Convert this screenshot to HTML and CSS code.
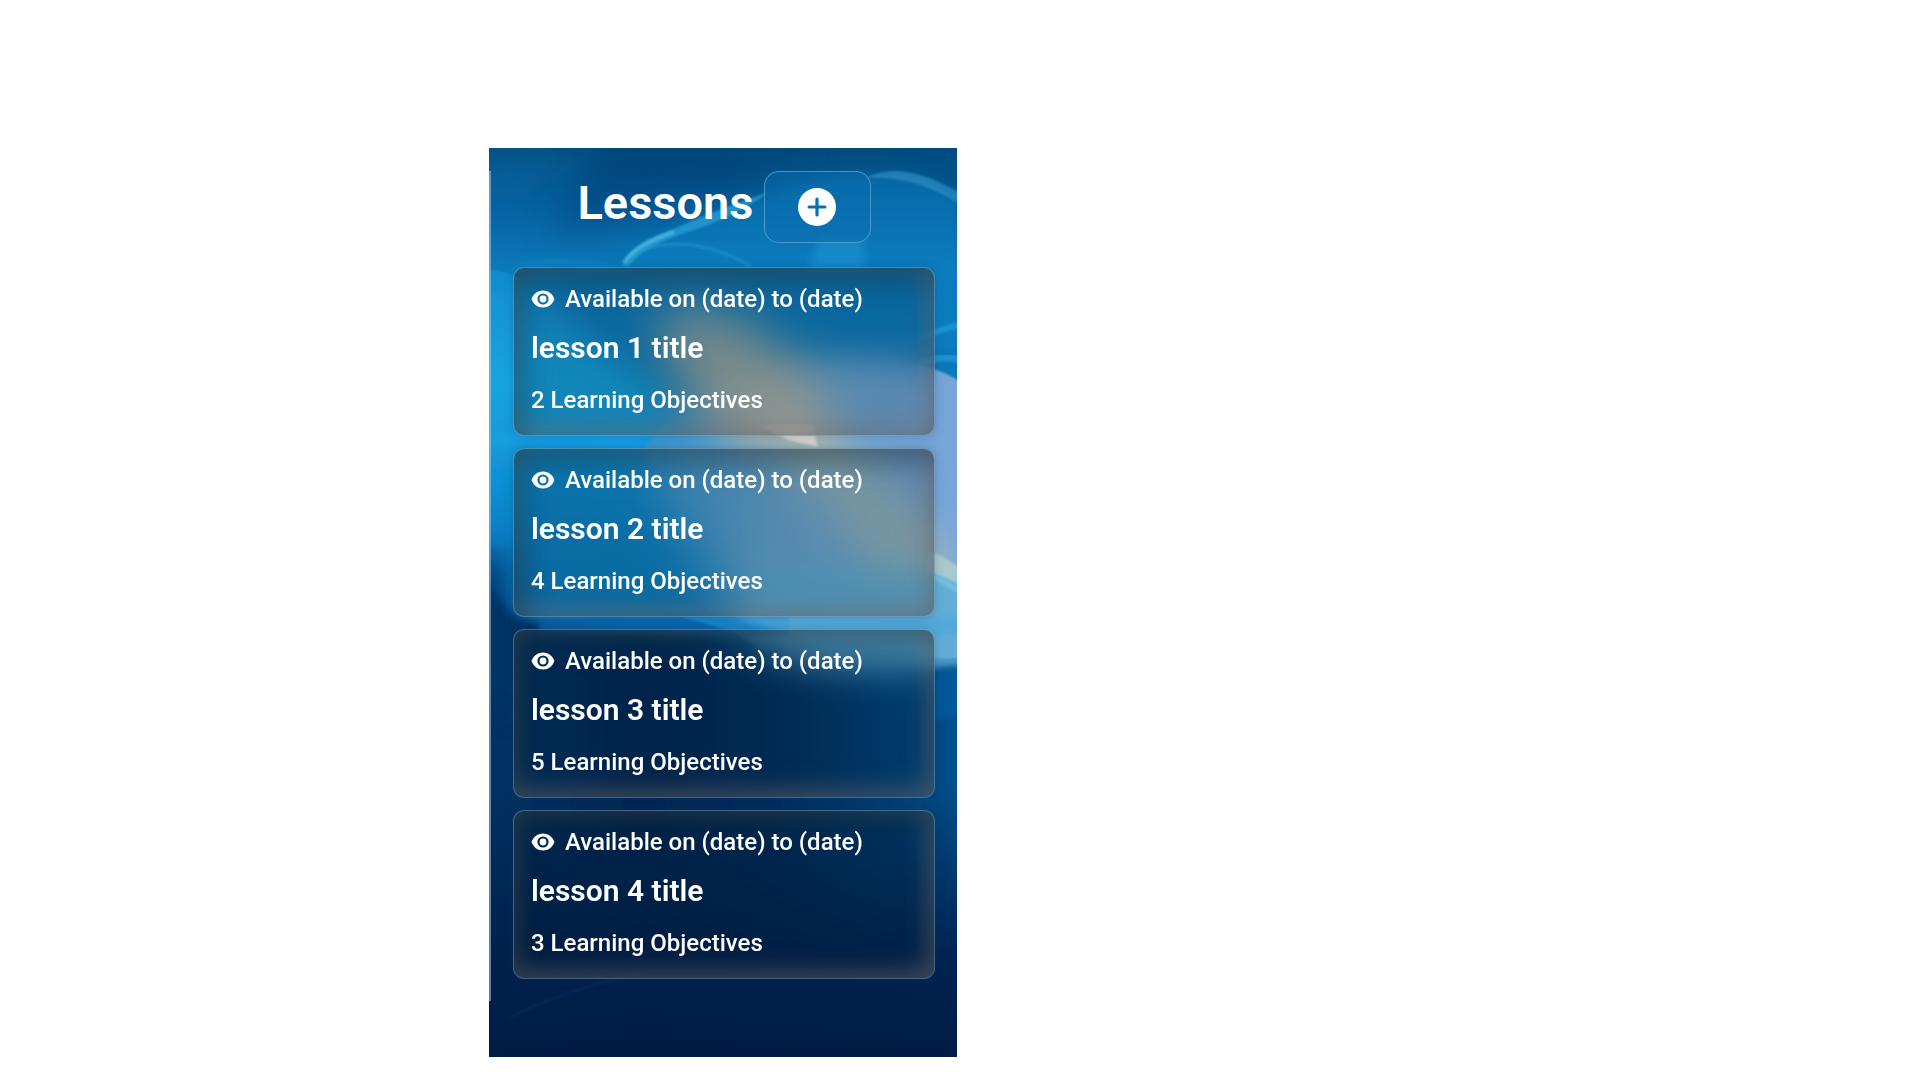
FILE: index.html
```html
<!DOCTYPE html>
<html lang="en">
<head>
    <meta charset="UTF-8">
    <meta name="viewport" content="width=device-width, initial-scale=1.0">
    <title>Lessons</title>
    <link rel="stylesheet" href="styles.css">
</head>
<body>

<!-- Icons -->
<svg class="icon-defs" aria-hidden="true">
    <symbol id="eye" viewBox="0 0 24 18">
        <path fill="currentColor" fill-rule="evenodd" d="M12 0.5C6.5 0.5 2.4 4 0.5 9c1.9 5 6 8.500 11.500 8.500s9.600-3.500 11.500-8.500C21.600 4 17.500 0.500 12 0.500zM12 3.400a5.600 5.600 0 1 1 0 11.200a5.600 5.600 0 0 1 0-11.200z"/>
        <circle cx="12" cy="9" r="3.400" fill="currentColor"/>
    </symbol>
</svg>

<main class="page">
    <div class="panel">
        <!-- Wallpaper -->
        <svg class="wallpaper" viewBox="0 0 468 909" preserveAspectRatio="none" aria-hidden="true">
            <defs>
                <linearGradient id="base" x1="0" y1="0" x2="0" y2="1">
                    <stop offset="0" stop-color="#024a7c"/>
                    <stop offset="0.06" stop-color="#05609f"/>
                    <stop offset="0.13" stop-color="#0d78b8"/>
                    <stop offset="0.25" stop-color="#0a78b8"/>
                    <stop offset="0.38" stop-color="#1083c8"/>
                    <stop offset="0.5" stop-color="#0a66ac"/>
                    <stop offset="0.6" stop-color="#033365"/>
                    <stop offset="0.75" stop-color="#002a57"/>
                    <stop offset="1" stop-color="#001d48"/>
                </linearGradient>
                <linearGradient id="lobe" x1="0" y1="0" x2="0" y2="1">
                    <stop offset="0" stop-color="#108cd0"/>
                    <stop offset="0.4" stop-color="#18a5e0"/>
                    <stop offset="0.75" stop-color="#1193d8"/>
                    <stop offset="1" stop-color="#0d78c0"/>
                </linearGradient>
                <linearGradient id="petal" x1="0" y1="0" x2="1" y2="0.2">
                    <stop offset="0" stop-color="#2f93cf"/>
                    <stop offset="0.5" stop-color="#6ba7d2"/>
                    <stop offset="1" stop-color="#78a5da"/>
                </linearGradient>
                <linearGradient id="night" x1="0" y1="0" x2="1" y2="0">
                    <stop offset="0" stop-color="#033668"/>
                    <stop offset="0.35" stop-color="#002754"/>
                    <stop offset="0.6" stop-color="#002f5e"/>
                    <stop offset="0.85" stop-color="#04457e"/>
                    <stop offset="1" stop-color="#07599a"/>
                </linearGradient>
                <linearGradient id="floor" x1="0" y1="0" x2="0" y2="1">
                    <stop offset="0" stop-color="#001e49" stop-opacity="0"/>
                    <stop offset="0.6" stop-color="#001e49" stop-opacity="0.85"/>
                    <stop offset="1" stop-color="#001c45"/>
                </linearGradient>
                <filter id="soft" x="-30%" y="-30%" width="160%" height="160%"><feGaussianBlur stdDeviation="5"/></filter>
                <filter id="softer" x="-50%" y="-50%" width="200%" height="200%"><feGaussianBlur stdDeviation="16"/></filter>
                <filter id="edge" x="-10%" y="-20%" width="120%" height="140%"><feGaussianBlur stdDeviation="1"/></filter>
                <filter id="haze" x="-10%" y="-30%" width="120%" height="160%"><feGaussianBlur stdDeviation="3"/></filter>
            </defs>
            <rect width="468" height="909" fill="url(#base)"/>
            <!-- ribbons behind the heading -->
            <path d="M-20 0H130L40 44L-20 60z" fill="#0b6aa8" opacity="0.4" filter="url(#softer)"/>
            <path d="M110 0H330L250 44L60 90z" fill="#013e72" opacity="0.5" filter="url(#softer)"/>
            <path d="M133 118C140 92 190 78 280 48C350 24 420 14 468 50V200H133z" fill="#0f83c4" opacity="0.4" filter="url(#soft)"/>
            <path d="M133 118C142 94 172 88 205 72C230 62 250 54 280 44C260 60 222 78 198 84C166 96 150 104 140 118z" fill="#2ca2da" opacity="0.7" filter="url(#edge)"/>
            <path d="M135 115C144 101 160 92 185 84" fill="none" stroke="#62c0e4" stroke-width="4" opacity="0.6" filter="url(#edge)"/>
            <path d="M150 103C190 88 230 100 262 118" fill="none" stroke="#2b9bd6" stroke-width="3" opacity="0.5" filter="url(#edge)"/>
            <path d="M376 30C410 14 440 28 474 46L474 58C440 36 410 28 376 30z" fill="#3da0d2" opacity="0.5" filter="url(#edge)"/>
            <path d="M330 90H375V122H320z" fill="#1f95d2" opacity="0.6" filter="url(#soft)"/>
            <path d="M20 122C36 106 90 108 133 118V140H10z" fill="#1088ca" opacity="0.6" filter="url(#haze)"/>
            <path d="M405 0H468V44C450 24 430 14 405 0z" fill="#034d83" opacity="0.6" filter="url(#soft)"/>
            <!-- left lobe -->
            <path d="M-10 122C12 120 26 128 40 135L190 260L170 400H-10z" fill="url(#lobe)" filter="url(#edge)"/>
            <path d="M410 205C430 190 450 180 478 176" fill="none" stroke="#28a0e2" stroke-width="6" opacity="0.6" filter="url(#edge)"/>
            <path d="M430 218C445 208 458 208 478 212" fill="none" stroke="#28a0e2" stroke-width="8" opacity="0.6" filter="url(#edge)"/>
            <!-- petal with its warm fold -->
            <path d="M155 300C180 260 270 200 360 208C420 212 455 220 478 238V510H290C220 480 170 420 155 300z" fill="url(#petal)" filter="url(#edge)"/>
            <path d="M165 170C230 140 290 190 330 240L360 310L250 300C210 270 175 220 165 170z" fill="#c3b59b" opacity="0.75" filter="url(#softer)"/>
            <path d="M290 270L360 300C400 330 450 370 470 430L400 470C370 400 330 340 290 300z" fill="#a9bdb4" opacity="0.7" filter="url(#softer)"/>
            <path d="M270 277L323 276L329 299L300 292z" fill="#d9d4cf" filter="url(#edge)"/>
            <path d="M-10 285H157V300H-10z" fill="#14a0e4" opacity="0.6" filter="url(#haze)"/>
            <path d="M30 310C150 320 220 370 260 500H30z" fill="#0b86c6" opacity="0.85" filter="url(#softer)"/>
            <path d="M260 430C360 410 450 420 488 432V522H270z" fill="#5cb0d8" opacity="0.8" filter="url(#soft)"/>
            <path d="M440 403C450 406 465 415 478 424V442C465 432 450 427 438 424z" fill="#b4d0cf" opacity="0.8" filter="url(#edge)"/>
            <path d="M438 426C450 430 460 436 478 448" fill="none" stroke="#79c4e6" stroke-width="6" opacity="0.7" filter="url(#edge)"/>
            <!-- lower shade -->
            <path d="M-40 430C0 430 10 450 22 466C60 482 160 484 200 486C260 495 340 524 400 526C440 526 465 520 508 518V960H-40z" fill="url(#night)" filter="url(#soft)"/>
            <path d="M-60 410H14V560H-60z" fill="#033668" filter="url(#softer)"/>
            <path d="M50 468H240L300 486H50z" fill="#0a5fa4" opacity="0.8" filter="url(#haze)"/>
            <path d="M190 468H300V486H250z" fill="#1c8bce" opacity="0.8" filter="url(#edge)"/>
            <path d="M240 468H478V486H300z" fill="#4fa8da" opacity="0.8" filter="url(#haze)"/>
            <path d="M446 528L456 520L478 518V570H446z" fill="#0560a5" opacity="0.6" filter="url(#haze)"/>
            <rect y="640" width="468" height="269" fill="url(#floor)"/>
            <path d="M20 870C60 850 95 838 150 826" fill="none" stroke="#0a3d70" stroke-width="3" opacity="0.3" filter="url(#edge)"/>
        </svg>

        <section class="lessons">
            <header class="lessons-header">
                <h1>Lessons</h1>
                <button type="button" class="add-button" aria-label="Add lesson">
                    <svg viewBox="0 0 38 38" aria-hidden="true">
                        <path fill="currentColor" fill-rule="evenodd" d="M19 0a19 19 0 1 1 0 38a19 19 0 0 1 0-38zM19 9.500a1.600 1.600 0 0 0-1.600 1.600v6.300h-6.300a1.600 1.600 0 0 0 0 3.200h6.300v6.300a1.600 1.600 0 0 0 3.200 0v-6.300h6.300a1.600 1.600 0 0 0 0-3.200h-6.300v-6.300a1.600 1.600 0 0 0-1.600-1.600z"/>
                    </svg>
                </button>
            </header>

            <div class="lesson-list">
                <article class="lesson">
                    <p class="availability"><svg class="eye"><use href="#eye"/></svg>Available on (date) to (date)</p>
                    <h2>lesson 1 title</h2>
                    <p class="objectives">2 Learning Objectives</p>
                </article>
                <article class="lesson">
                    <p class="availability"><svg class="eye"><use href="#eye"/></svg>Available on (date) to (date)</p>
                    <h2>lesson 2 title</h2>
                    <p class="objectives">4 Learning Objectives</p>
                </article>
                <article class="lesson">
                    <p class="availability"><svg class="eye"><use href="#eye"/></svg>Available on (date) to (date)</p>
                    <h2>lesson 3 title</h2>
                    <p class="objectives">5 Learning Objectives</p>
                </article>
                <article class="lesson">
                    <p class="availability"><svg class="eye"><use href="#eye"/></svg>Available on (date) to (date)</p>
                    <h2>lesson 4 title</h2>
                    <p class="objectives">3 Learning Objectives</p>
                </article>
            </div>
        </section>
    </div>
</main>

</body>
</html>
```
FILE: styles.css
```css
* {
    box-sizing: border-box;
}

body {
    margin: 0;
    background-color: #fff;
    color: #fff;
    font-family: Roboto, "Liberation Sans", sans-serif;
}

h1, h2, p {
    margin: 0;
}

.icon-defs {
    position: absolute;
    width: 0;
    height: 0;
}

.page {
    display: grid;
    grid-template-columns: 489fr minmax(400px, 468fr) 963fr;
    padding: 148px 0 23px;
}

.panel {
    grid-column: 2;
    position: relative;
    padding: 23px 0 56px;
    background-color: #00285a;
}

.wallpaper {
    position: absolute;
    top: 0;
    left: 0;
    width: 100%;
    height: 100%;
}

.lessons {
    position: relative;
    padding: 0 22px 22px;
    border-left: 2px solid rgba(160, 195, 225, 0.6);
}

.lessons-header {
    display: flex;
    justify-content: center;
    gap: 10px;
    margin-bottom: 24px;
}

h1 {
    font-size: 47px;
    font-weight: 600;
    line-height: 64px;
}

.add-button {
    display: flex;
    align-items: center;
    justify-content: center;
    width: 107px;
    height: 72px;
    padding: 0;
    color: #fff;
    background-color: rgba(10, 110, 175, 0.5);
    border: 1px solid rgba(130, 190, 230, 0.55);
    border-radius: 15px;
    cursor: pointer;
}

.add-button svg {
    width: 38px;
    height: 38px;
}

.lesson-list {
    display: grid;
    gap: 12px;
}

.lesson {
    min-height: 169px;
    padding: 15px 17px;
    border: 1px solid rgba(140, 165, 185, 0.5);
    border-radius: 11px;
    background-color: rgba(0, 25, 40, 0.2);
    backdrop-filter: blur(18px);
    box-shadow: 0 0 10px rgba(0, 60, 110, 0.25),
        inset 8px 14px 28px rgba(20, 45, 55, 0.4),
        inset -6px -8px 26px rgba(135, 120, 115, 0.4),
        inset 0 0 24px rgba(115, 105, 100, 0.2);
}

.availability {
    display: flex;
    align-items: center;
    gap: 10px;
    font-size: 24px;
    font-weight: 500;
    line-height: 32px;
}

.eye {
    width: 24px;
    height: 18px;
}

.lesson h2 {
    margin: 15px 0 18px;
    font-size: 30px;
    font-weight: 600;
    line-height: 36px;
}

.objectives {
    font-size: 24px;
    font-weight: 500;
    line-height: 32px;
}
```
